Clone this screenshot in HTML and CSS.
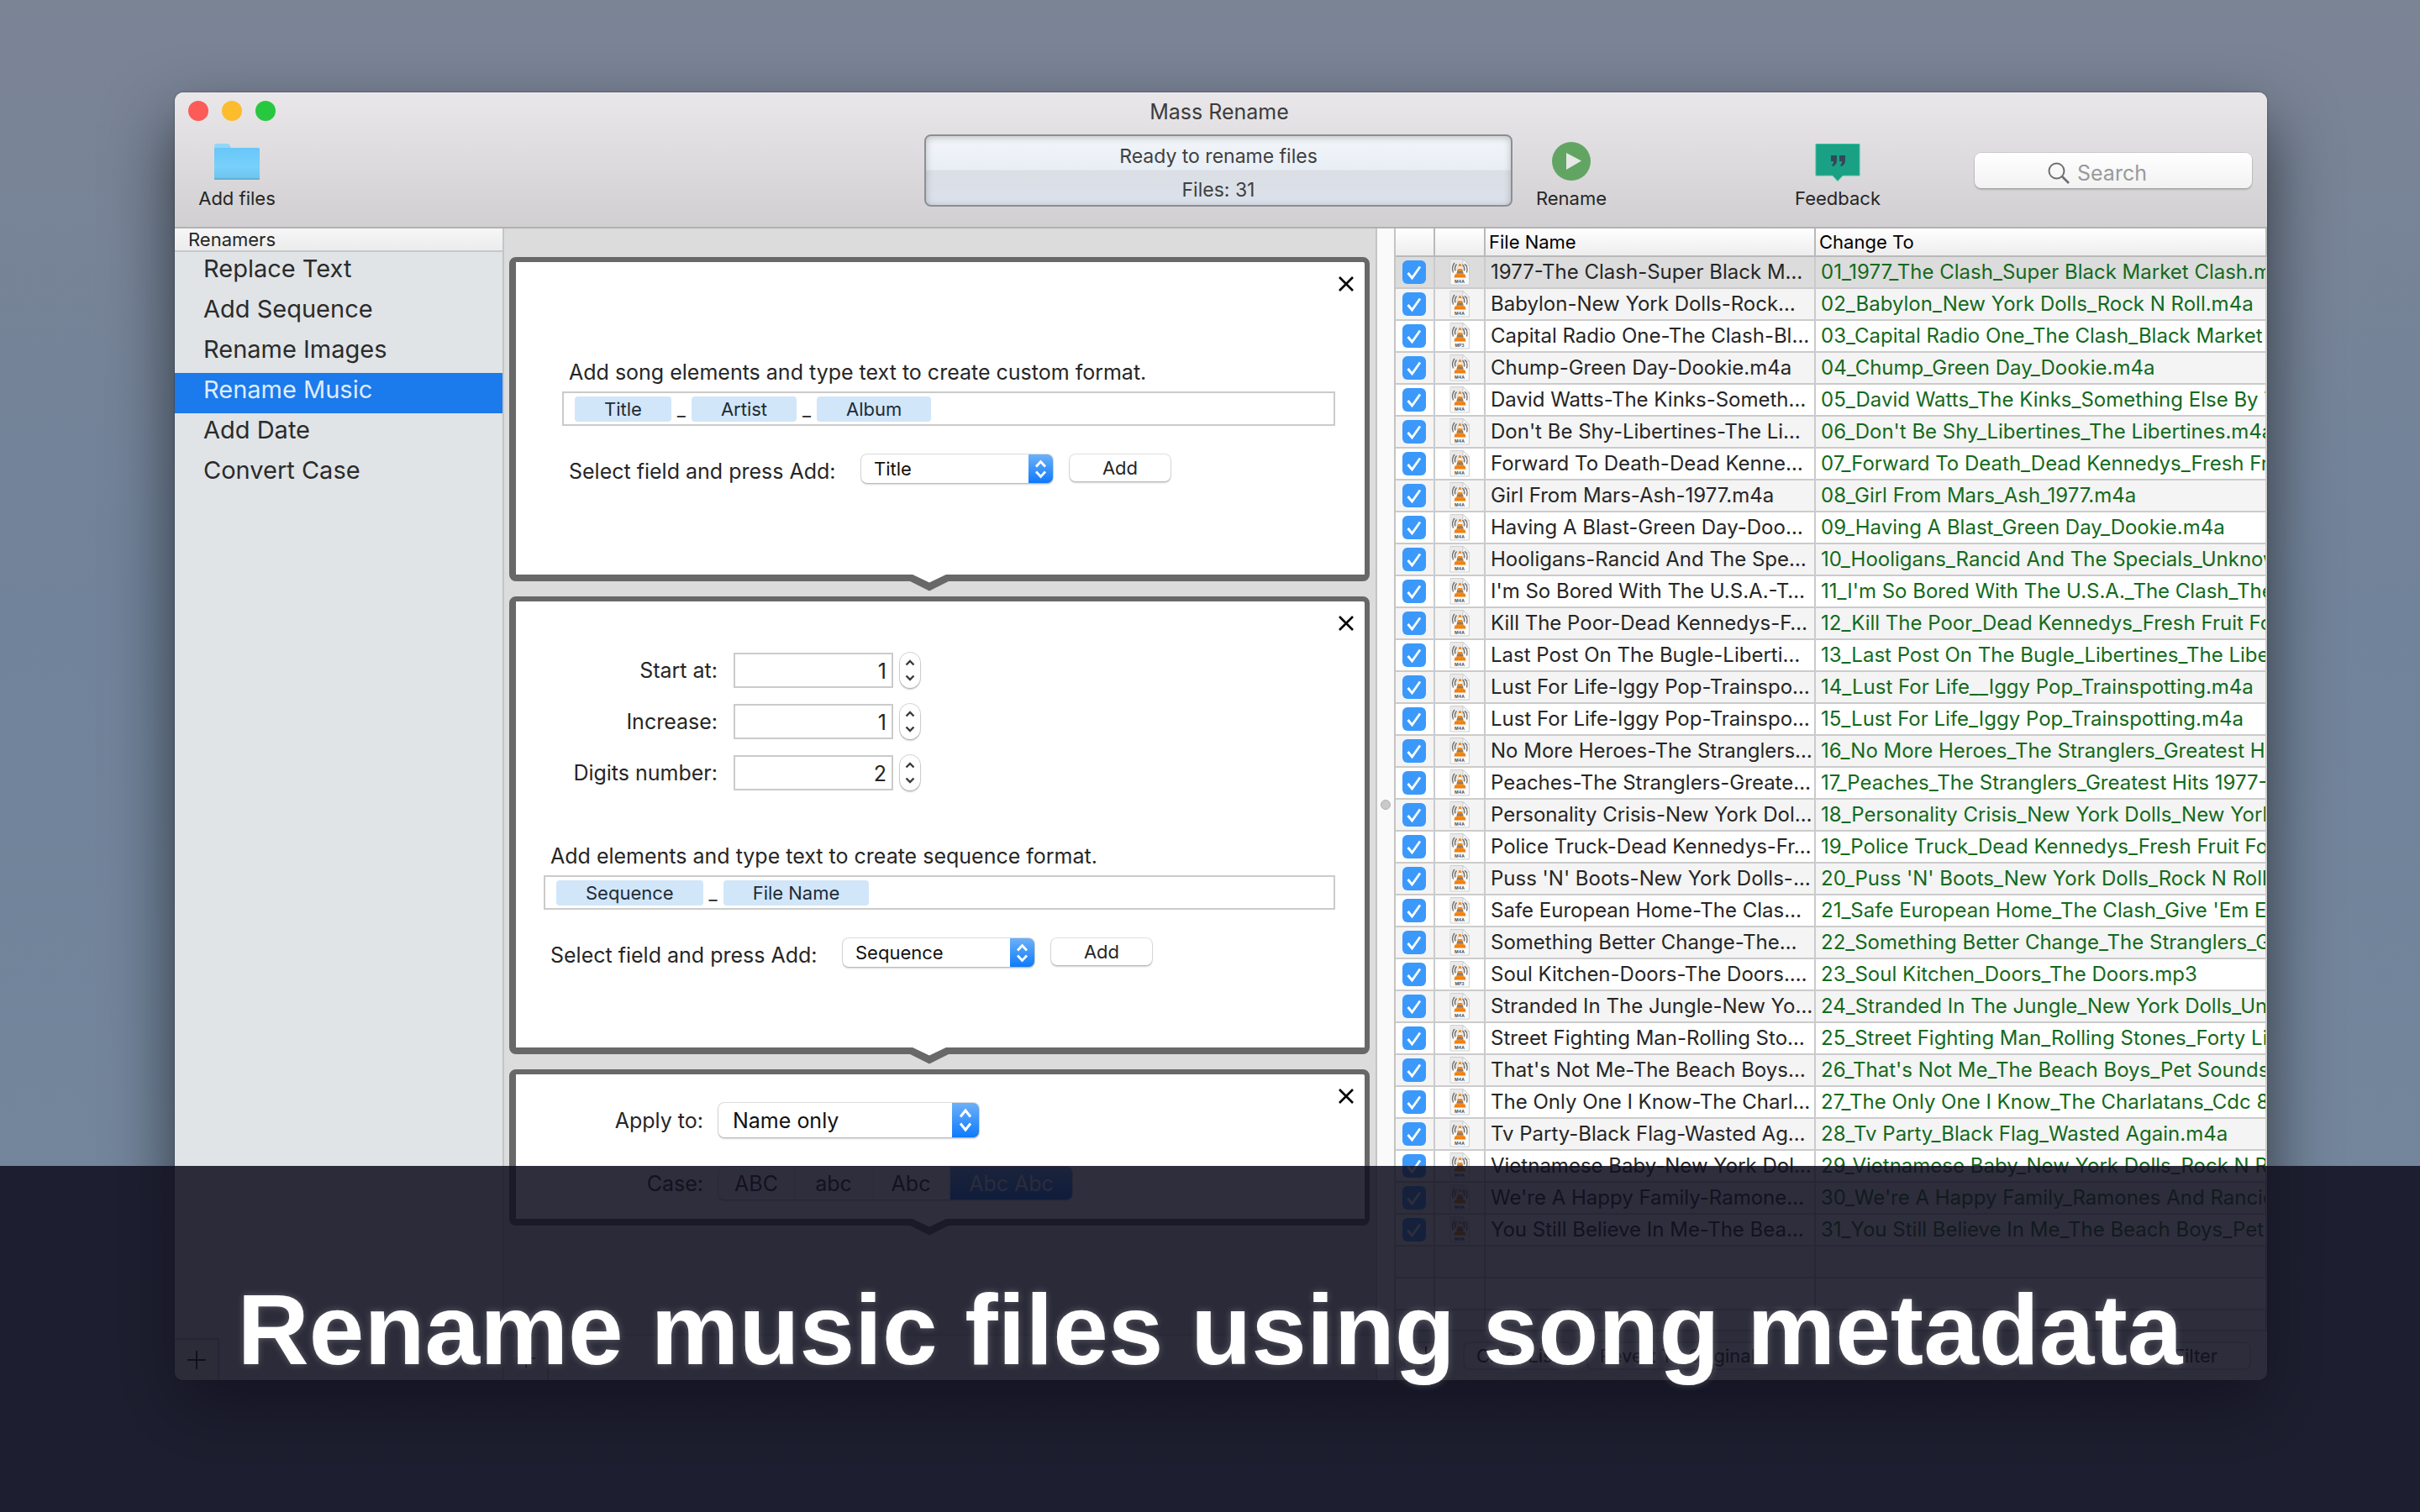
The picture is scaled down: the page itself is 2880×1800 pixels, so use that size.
FILE: index.html
```html
<!DOCTYPE html>
<html lang="en">
<head>
<meta charset="utf-8">
<title>Mass Rename</title>
<link rel="stylesheet" href="styles.css">
</head>
<body>
<svg class="defs" aria-hidden="true">
  <symbol id="notch" viewBox="0 0 56 20"><path d="M3 7L28 19.500L53 7Z" fill="#686868"/><path d="M6 -1H50L28 9.500Z" fill="#fff"/></symbol>
  <symbol id="close" viewBox="0 0 18 18"><path d="M1 1L17 17M17 1L1 17" stroke="#000" stroke-width="2.600" fill="none"/></symbol>
  <symbol id="up" viewBox="0 0 12 8"><path d="M1.500 6.500L6 2L10.500 6.500" stroke="#3a3a3a" stroke-width="2.400" fill="none"/></symbol>
  <symbol id="down" viewBox="0 0 12 8"><path d="M1.500 1.500L6 6L10.500 1.500" stroke="#3a3a3a" stroke-width="2.400" fill="none"/></symbol>
  <symbol id="plus" viewBox="0 0 22 22"><path d="M11 0V22M0 11H22" stroke="#1a1a1a" stroke-width="2" fill="none"/></symbol>
  <symbol id="doc" viewBox="0 0 24 32">
    <path d="M1 .5H16L23.500 8V31H1Z" fill="#fbfbfb" stroke="#cfcfcf"/>
    <path d="M1.500 1H16L20 14H1.500Z" fill="#e9e9e9"/>
    <path d="M16 .5V8H23.500Z" fill="#fff" stroke="#bdbdbd" stroke-width=".8"/>
    <path d="M6 5Q2 10 4.500 16.500M8.500 6.500Q5.500 10 7 14.500M18 6Q22.500 10 20.500 16.500M15.500 7Q18.500 10 17.500 14.500" fill="none" stroke="#6a6a6a" stroke-width="1.300"/>
    <path d="M6.500 18.500H18.500L19.500 22.500H5.500Z" fill="#f07f0e"/>
    <path d="M11.500 6H13.500L17 19Q12.500 21.500 8 19Z" fill="#f08a1c"/>
    <path d="M10.800 9H14.300L15.200 12H10Z" fill="#f7f1ea"/>
    <path d="M9.300 14.500H15.800L16.500 17.200H8.700Z" fill="#8d7c70"/>
  </symbol>
</svg>

<main class="window">
  <header class="chrome">
    <div class="titlebar">
      <div class="lights"><i class="light red"></i><i class="light amber"></i><i class="light green"></i></div>
      <h1 class="title">Mass Rename</h1>
    </div>
    <div class="toolbar">
      <div class="tools-left">
        <button class="tool" type="button">
          <svg class="tool-icon" viewBox="0 0 54 48">
            <defs><linearGradient id="fold" x1="0" y1="0" x2="0" y2="1"><stop offset="0" stop-color="#68c7f8"/><stop offset=".6" stop-color="#78d0fa"/><stop offset="1" stop-color="#6cc3ec"/></linearGradient></defs>
            <path d="M0 6Q0 3 3 3H16Q18 3 20 8H52Q54 8 54 10V20H0Z" fill="#92d6f7"/>
            <rect y="8" width="54" height="38" rx="2" fill="url(#fold)"/><path d="M0 45H54" stroke="#5fa9cc" stroke-width="1.500"/>
          </svg>
          Add files
        </button>
      </div>
      <div class="status" role="status"><span>Ready to rename files</span><span>Files: 31</span></div>
      <div class="tools-right">
        <button class="tool tool-wide" type="button">
          <svg class="tool-icon" viewBox="0 0 54 48"><circle cx="27" cy="24" r="23" fill="#62a563"/><path d="M21 14L39 23.500L21 34Z" fill="#e6e9e6"/></svg>
          Rename
        </button>
        <button class="tool tool-feedback" type="button">
          <svg class="tool-icon" viewBox="0 0 54 48"><path d="M1 3.500H53V41H33L27 47.500L21 41H1Z" fill="#1aa084" stroke="#35c3a0"/><path d="M19 17h7v6q0 5 -4.500 7l-1.500 -1q2 -1.500 2.300 -5h-3.300zM29 17h7v6q0 5 -4.500 7l-1.500 -1q2 -1.500 2.300 -5h-3.300z" fill="#33475a"/></svg>
          Feedback
        </button>
        <label class="search">
          <svg class="search-icon" viewBox="0 0 26 26"><circle cx="10.500" cy="10.500" r="9" fill="none" stroke="#6e6e6e" stroke-width="2"/><path d="M17 17L25 25" stroke="#6e6e6e" stroke-width="2.600"/></svg>
          <input class="search-input" type="text" placeholder="Search" aria-label="Search">
        </label>
      </div>
    </div>
  </header>

  <div class="content">
    <nav class="sidebar">
      <h2 class="sidebar-head">Renamers</h2>
      <ul class="renamers">
        <li><a href="#text">Replace Text</a></li>
        <li><a href="#sequence">Add Sequence</a></li>
        <li><a href="#images">Rename Images</a></li>
        <li><a class="current" href="#music">Rename Music</a></li>
        <li><a href="#date">Add Date</a></li>
        <li><a href="#case">Convert Case</a></li>
      </ul>
      <button class="corner-add" type="button" aria-label="Add renamer"><svg class="plus"><use href="#plus"/></svg></button>
    </nav>

    <section class="steps">
      <div class="step-list">
        <form class="step step-music">
          <button class="close" type="button" aria-label="Remove step"><svg class="close-icon"><use href="#close"/></svg></button>
          <label class="hint" for="songFormat">Add song elements and type text to create custom format.</label>
          <div class="tokens"><span class="token">Title</span><span class="sep">_</span><span class="token">Artist</span><span class="sep">_</span><span class="token">Album</span><input class="token-input" id="songFormat" type="text"></div>
          <div class="picker">
            <label class="picker-label" for="songField">Select field and press Add:</label>
            <select class="select" id="songField"><option>Title</option><option>Artist</option><option>Album</option></select>
            <button class="push" type="button">Add</button>
          </div>
          <svg class="notch"><use href="#notch"/></svg>
        </form>

        <form class="step step-sequence">
          <button class="close" type="button" aria-label="Remove step"><svg class="close-icon"><use href="#close"/></svg></button>
          <div class="numbers">
            <label for="start">Start at:</label><input class="number" id="start" type="text" value="1">
            <span class="stepper"><button type="button" aria-label="More"><svg><use href="#up"/></svg></button><button type="button" aria-label="Less"><svg><use href="#down"/></svg></button></span>
            <label for="increase">Increase:</label><input class="number" id="increase" type="text" value="1">
            <span class="stepper"><button type="button" aria-label="More"><svg><use href="#up"/></svg></button><button type="button" aria-label="Less"><svg><use href="#down"/></svg></button></span>
            <label for="digits">Digits number:</label><input class="number" id="digits" type="text" value="2">
            <span class="stepper"><button type="button" aria-label="More"><svg><use href="#up"/></svg></button><button type="button" aria-label="Less"><svg><use href="#down"/></svg></button></span>
          </div>
          <label class="hint" for="seqFormat">Add elements and type text to create sequence format.</label>
          <div class="tokens"><span class="token">Sequence</span><span class="sep">_</span><span class="token">File Name</span><input class="token-input" id="seqFormat" type="text"></div>
          <div class="picker">
            <label class="picker-label" for="seqField">Select field and press Add:</label>
            <select class="select" id="seqField"><option>Sequence</option><option>File Name</option></select>
            <button class="push" type="button">Add</button>
          </div>
          <svg class="notch"><use href="#notch"/></svg>
        </form>

        <form class="step step-case">
          <button class="close" type="button" aria-label="Remove step"><svg class="close-icon"><use href="#close"/></svg></button>
          <label for="applyTo">Apply to:</label>
          <select class="select select-large" id="applyTo"><option>Name only</option><option>Extension only</option></select>
          <span>Case:</span>
          <div class="segments"><button type="button">ABC</button><button type="button">abc</button><button type="button">Abc</button><button class="on" type="button">Abc Abc</button></div>
          <svg class="notch"><use href="#notch"/></svg>
        </form>
      </div>
      <div class="steps-foot"><button class="corner-add" type="button" aria-label="Add step"><svg class="plus"><use href="#plus"/></svg></button></div>
    </section>

    <div class="splitter"><i class="grip"></i></div>

    <section class="files">
      <div class="table-area">
        <table class="table">
          <colgroup><col class="col-check"><col class="col-icon"><col class="col-name"><col></colgroup>
          <thead><tr><th></th><th></th><th>File Name</th><th>Change To</th></tr></thead>
          <tbody id="rows"></tbody>
        </table>
      </div>
      <footer class="files-foot">
        <button class="foot-button foot-plus" type="button" aria-label="Add"><svg class="plus"><use href="#plus"/></svg></button>
        <button class="foot-button" type="button">Clear List</button>
        <button class="foot-button" type="button">Revert To Original</button>
        <button class="foot-button foot-filter" type="button">Filter</button>
      </footer>
    </section>
  </div>
</main>

<div class="banner"><p class="banner-text">Rename music files using song metadata</p></div>
<script src="rows.js"></script>
</body>
</html>
```
FILE: styles.css
```css
* { box-sizing: border-box; }
body {
  margin: 0;
  height: 100vh;
  padding: 110px 182px 157px 208px;
  overflow: hidden;
  position: relative;
  background: linear-gradient(#7b8495, #71839a 40%, #74879d);
  font: 25px/32px Inter, "Liberation Sans", sans-serif;
  color: #262626;
}
button, input, select { font: inherit; color: inherit; margin: 0; }
button { padding: 0; border: 0; background: none; }
svg { display: block; }
.defs { position: absolute; width: 0; height: 0; }

.window {
  height: 100%;
  display: flex;
  flex-direction: column;
  overflow: hidden;
  border-radius: 10px;
  background: #ececec;
  box-shadow: 0 0 2px rgba(0,0,0,.5), 0 36px 80px rgba(0,0,0,.6);
}

/* title bar and toolbar */
.chrome { background: linear-gradient(#e9e7e9, #d1cfd1); border-bottom: 2px solid #b3b1b3; flex: none; }
.titlebar { display: grid; grid-template-columns: 1fr auto 1fr; padding: 0 20px 0 16px; align-items: center; height: 44px; }
.lights { display: flex; gap: 16px; }
.light { width: 24px; height: 24px; border-radius: 50%; }
.red { background: #fc5b57; }
.amber { background: #fdbc2e; }
.green { background: #27c840; }
.title { margin: 0; padding-top: 2px; font: inherit; line-height: 42px; color: #3c3c3c; }
.toolbar { display: grid; grid-template-columns: 1fr 700px 1fr; padding: 6px 6px 21px 0; }
.tools-left { display: flex; padding-left: 24px; align-items: flex-start; }
.tools-right { display: flex; padding-right: 12px; align-items: flex-start; }
.tool { width: 100px; padding-top: 8px; display: flex; flex-direction: column; align-items: center; gap: 7px; font-size: 22px; line-height: 26px; }
.tool-wide { width: 140px; }
.tool-feedback { margin-left: auto; }
.tool-icon { width: 54px; height: 48px; }
.status {
  height: 86px;
  display: flex;
  flex-direction: column;
  align-items: center;
  gap: 8px;
  padding-top: 8px;
  border: 2px solid #8e8e92;
  border-radius: 8px;
  background: linear-gradient(#f3f6fa, #e8eef5 49%, #dbdfe4 50%, #dbe1ec);
  box-shadow: inset 0 2px 8px rgba(0,0,0,.22);
  font-size: 23px;
  color: #404040;
}
.search {
  width: 330px;
  height: 42px;
  margin: 22px 0 0 113px;
  padding: 6px 0 0 87px;
  display: flex;
  align-items: center;
  gap: 9px;
  border-radius: 8px;
  background: linear-gradient(#fff, #f2f2f2);
  box-shadow: 0 0 0 1px rgba(0,0,0,.08), 0 2px 2px rgba(0,0,0,.18);
}
.search-icon { width: 26px; height: 26px; flex: none; }
.search-input { width: 140px; border: 0; background: none; padding: 0; outline: 0; }
.search-input::placeholder { color: #9a9a9a; opacity: 1; }

.content { flex: 1; min-height: 0; display: grid; grid-template-columns: 392px minmax(0, 1fr) 24px minmax(0, 1fr); }

/* list of renamers */
.sidebar { display: flex; flex-direction: column; background: #e0e4e7; border-right: 2px solid #c3c5c7; }
.sidebar-head { margin: 0; padding-left: 16px; font-size: 22px; line-height: 26px; font-weight: 400; background: linear-gradient(#f6f6f6, #ececec); border-bottom: 2px solid #c6c8ca; }
.renamers { margin: 0; padding: 0; list-style: none; flex: 1; }
.renamers a { display: block; height: 48px; padding-left: 34px; font-size: 29px; line-height: 40px; color: #2b2b2b; text-decoration: none; }
.renamers .current { background: #1b7aec; color: #dfecfb; }
.corner-add { width: 53px; height: 50px; display: grid; place-items: center; border: solid #bcbcbc; border-width: 2px 2px 0 0; background: #e6eae8; }
.plus { width: 22px; height: 22px; }

/* renamer steps */
.steps { display: flex; flex-direction: column; min-height: 0; background: #dcdcdc; }
.step-list { flex: 1; min-height: 0; padding: 34px 7px 0 6px; display: flex; flex-direction: column; gap: 18px; }
.step { position: relative; flex: none; background: #fff; border: solid #686868; border-width: 6px 6px 8px 8px; border-radius: 8px; }
.step-music { padding: 115px 35px 103px 55px; }
.step-sequence { padding: 61px 35px 90px 33px; }
.step-case { padding: 34px 35px 23px 0; display: grid; grid-template-columns: 223px auto; justify-content: start; justify-items: start; align-items: center; gap: 35px 18px; }
.step-case > label, .step-case > span { justify-self: end; }
.close { position: absolute; top: 10px; right: 6px; width: 32px; height: 32px; display: grid; place-items: center; }
.close-icon { width: 18px; height: 18px; }
.notch { position: absolute; left: 464px; top: 100%; width: 56px; height: 20px; }
.hint { display: block; padding-left: 8px; }
.tokens { height: 41px; margin: 7px 0 34px; padding-left: 13px; display: flex; align-items: center; border: 2px solid #cbcbcb; }
.token { padding: 0 35px; border-radius: 4px; background: #d1e6f9; color: #1f2b36; font-size: 22px; line-height: 30px; }
.sep { width: 24px; font-size: 22px; line-height: 30px; text-align: center; }
.token-input { flex: 1; min-width: 0; border: 0; padding: 0; background: none; outline: 0; }
.picker { display: flex; align-items: flex-start; padding-left: 8px; }
.picker-label { width: 348px; line-height: 40px; }
.select {
  appearance: none;
  width: 228px;
  height: 34px;
  padding: 0 0 0 15px;
  border: 0;
  border-radius: 7px;
  font-size: 22px;
  color: #111;
  background:
    url("data:image/svg+xml,%3Csvg xmlns='http://www.w3.org/2000/svg' width='29' height='34'%3E%3Cpath d='M9 14.500L14.500 8.500L20 14.500M9 20.500L14.500 26.500L20 20.500' fill='none' stroke='white' stroke-width='2.800'/%3E%3C/svg%3E") right / 29px 34px no-repeat,
    linear-gradient(#6cb1f8, #0e7afc) right / 29px 100% no-repeat,
    #fff;
  box-shadow: 0 0 0 1px rgba(0,0,0,.14), 0 2px 2px rgba(0,0,0,.16);
}
.select-large {
  width: 310px;
  height: 41px;
  padding-left: 17px;
  font-size: 25px;
  background:
    url("data:image/svg+xml,%3Csvg xmlns='http://www.w3.org/2000/svg' width='32' height='41'%3E%3Cpath d='M10 16.500L16 9L22 16.500M10 24.500L16 32L22 24.500' fill='none' stroke='white' stroke-width='3'/%3E%3C/svg%3E") right / 32px 41px no-repeat,
    linear-gradient(#6cb1f8, #0e7afc) right / 32px 100% no-repeat,
    #fff;
}
.push { width: 120px; height: 32px; margin-left: 20px; border-radius: 7px; background: #fff; font-size: 22px; box-shadow: 0 0 0 1px rgba(0,0,0,.12), 0 2px 2px rgba(0,0,0,.18); }
.numbers { display: grid; grid-template-columns: 207px 190px 24px; gap: 19px 0; align-items: center; margin-bottom: 62px; }
.numbers label { text-align: right; }
.number { width: 190px; height: 42px; margin-left: 19px; padding: 2px 6px 0; border: 2px solid #cbcbcb; text-align: right; background: #fff; }
.stepper { width: 24px; height: 42px; margin-left: 27px; display: flex; flex-direction: column; justify-content: center; gap: 10px; border-radius: 12px; background: #fff; box-shadow: 0 0 0 1px rgba(0,0,0,.16), 0 2px 2px rgba(0,0,0,.18); }
.stepper button { display: grid; place-items: center; height: 8px; }
.stepper svg { width: 12px; height: 8px; }
.segments { display: flex; height: 39px; border-radius: 7px; overflow: hidden; box-shadow: 0 0 0 1px rgba(0,0,0,.16), 0 2px 2px rgba(0,0,0,.16); }
.segments button { width: 92px; border-right: 2px solid #ececec; }
.segments .on { width: 145px; border: 0; color: #dcebff; background: linear-gradient(#66adf8, #0a74f8); }
.steps-foot { height: 55px; border-top: 2px solid #c4c4c4; background: #e2e2e2; }
.steps-foot .corner-add { height: 53px; border-top: 0; background: #e9e9e9; }

.splitter { display: grid; place-items: center; border: solid #c4c4c4; border-width: 0 2px; background: #fafafa; }
.grip { width: 12px; height: 12px; border-radius: 50%; background: #c9c9c9; border: 1px solid #b2b2b2; }

/* file table */
.files { display: flex; flex-direction: column; min-height: 0; }
.table-area { flex: 1; min-height: 0; overflow: hidden; background: #fff; }
.table { width: 100%; table-layout: fixed; border-collapse: separate; border-spacing: 0; }
.col-check { width: 47px; }
.col-icon { width: 60px; }
.col-name { width: 393px; }
.table th { height: 34px; padding: 0 0 0 4px; font-size: 22px; line-height: 32px; font-weight: 400; text-align: left; color: #000; background: linear-gradient(#fff, #ededed); border: solid #b9b9b9; border-width: 0 2px 2px 0; }
.table td { height: 38px; padding: 0 0 0 6px; font-size: 24px; line-height: 36px; white-space: nowrap; overflow: hidden; border: solid #cbcbcb; border-width: 0 2px 2px 0; }
.table tr > :nth-child(-n+2) { padding: 0; }
.table tbody tr:nth-child(even) { background: #f4f4f4; }
.table tbody tr:first-child { background: #dcdcdc; }
.table .new-name { color: #146a1c; }
.check {
  appearance: none;
  display: block;
  width: 28px;
  height: 28px;
  margin: 0 auto 0 8px;
  border-radius: 6px;
}
.check:checked {
  background: #3b99fc url("data:image/svg+xml,%3Csvg xmlns='http://www.w3.org/2000/svg' width='28' height='28'%3E%3Cpath d='M6.500 15L11.500 21L21 7.500' fill='none' stroke='white' stroke-width='2.800'/%3E%3C/svg%3E") center / 28px 28px no-repeat;
}
.doc { width: 24px; height: 32px; margin: 0 auto; }
.files-foot { height: 60px; padding: 12px 19px 0 9px; display: flex; gap: 17px; border-top: 2px solid #c4c4c4; background: #ececec; }
.foot-button { height: 34px; padding: 0 14px; border: 2px solid #d0d0d0; border-radius: 8px; background: #f3f3f3; font-size: 22px; line-height: 30px; }
.foot-plus { width: 54px; display: grid; place-items: center; padding: 0; }
.foot-filter { width: 134px; margin-left: auto; padding-left: 40px; text-align: left; }

/* caption band over the lower part of the desktop */
.banner { position: absolute; inset: auto 0 0; height: 412px; padding-bottom: 22px; display: grid; place-items: center; background: rgba(16,15,31,.87); }
.banner-text { margin: 0; font: bold 118px/136px "Liberation Sans", Arial, sans-serif; color: #fff; white-space: nowrap; text-shadow: 0 0 8px rgba(255,255,255,.25); }
```
FILE: rows.js
```
const files = [
  ["1977-The Clash-Super Black M…", "1977_The Clash_Super Black Market Clash.m4a"],
  ["Babylon-New York Dolls-Rock…", "Babylon_New York Dolls_Rock N Roll.m4a"],
  ["Capital Radio One-The Clash-Bl…", "Capital Radio One_The Clash_Black Market", "MP3"],
  ["Chump-Green Day-Dookie.m4a", "Chump_Green Day_Dookie.m4a"],
  ["David Watts-The Kinks-Someth…", "David Watts_The Kinks_Something Else By The"],
  ["Don't Be Shy-Libertines-The Li…", "Don't Be Shy_Libertines_The Libertines.m4a"],
  ["Forward To Death-Dead Kenne…", "Forward To Death_Dead Kennedys_Fresh Fruit"],
  ["Girl From Mars-Ash-1977.m4a", "Girl From Mars_Ash_1977.m4a"],
  ["Having A Blast-Green Day-Doo…", "Having A Blast_Green Day_Dookie.m4a"],
  ["Hooligans-Rancid And The Spe…", "Hooligans_Rancid And The Specials_Unknown"],
  ["I'm So Bored With The U.S.A.-T…", "I'm So Bored With The U.S.A._The Clash_The"],
  ["Kill The Poor-Dead Kennedys-F…", "Kill The Poor_Dead Kennedys_Fresh Fruit For"],
  ["Last Post On The Bugle-Liberti…", "Last Post On The Bugle_Libertines_The Libertines"],
  ["Lust For Life-Iggy Pop-Trainspo…", "Lust For Life__Iggy Pop_Trainspotting.m4a"],
  ["Lust For Life-Iggy Pop-Trainspo…", "Lust For Life_Iggy Pop_Trainspotting.m4a"],
  ["No More Heroes-The Stranglers…", "No More Heroes_The Stranglers_Greatest Hits"],
  ["Peaches-The Stranglers-Greate…", "Peaches_The Stranglers_Greatest Hits 1977-"],
  ["Personality Crisis-New York Dol…", "Personality Crisis_New York Dolls_New York"],
  ["Police Truck-Dead Kennedys-Fr…", "Police Truck_Dead Kennedys_Fresh Fruit For"],
  ["Puss 'N' Boots-New York Dolls-…", "Puss 'N' Boots_New York Dolls_Rock N Roll.m4a"],
  ["Safe European Home-The Clas…", "Safe European Home_The Clash_Give 'Em Enough"],
  ["Something Better Change-The…", "Something Better Change_The Stranglers_Greatest"],
  ["Soul Kitchen-Doors-The Doors.…", "Soul Kitchen_Doors_The Doors.mp3", "MP3"],
  ["Stranded In The Jungle-New Yo…", "Stranded In The Jungle_New York Dolls_Unknown"],
  ["Street Fighting Man-Rolling Sto…", "Street Fighting Man_Rolling Stones_Forty Licks"],
  ["That's Not Me-The Beach Boys…", "That's Not Me_The Beach Boys_Pet Sounds"],
  ["The Only One I Know-The Charl…", "The Only One I Know_The Charlatans_Cdc 85"],
  ["Tv Party-Black Flag-Wasted Ag…", "Tv Party_Black Flag_Wasted Again.m4a"],
  ["Vietnamese Baby-New York Dol…", "Vietnamese Baby_New York Dolls_Rock N Roll"],
  ["We're A Happy Family-Ramone…", "We're A Happy Family_Ramones And Rancid"],
  ["You Still Believe In Me-The Bea…", "You Still Believe In Me_The Beach Boys_Pet"]
];

const icon = kind => `<svg class="doc" viewBox="0 0 24 32"><use href="#doc"/><text x="12" y="29" font-size="5" font-weight="700" text-anchor="middle" fill="#555">${kind}</text></svg>`;

const rows = files.map(([name, next, kind = "M4A"], i) =>
  `<tr><td><input class="check" type="checkbox" checked aria-label="${name}"></td><td>${icon(kind)}</td><td>${name}</td><td class="new-name">${String(i + 1).padStart(2, "0")}_${next}</td></tr>`);

// blank rows carry the grid lines down to the footer
const blank = "<tr><td></td><td></td><td></td><td></td></tr>".repeat(3);
document.getElementById("rows").innerHTML = rows.join("") + blank;
```
